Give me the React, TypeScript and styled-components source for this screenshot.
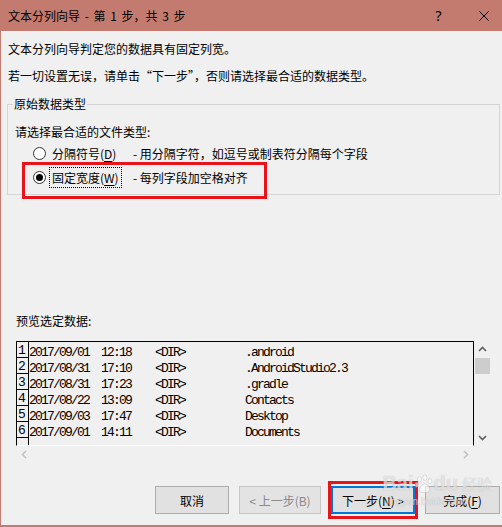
import styled, { createGlobalStyle } from 'styled-components'

const GlobalStyle = createGlobalStyle`
    html, body {
        margin: 0;
        padding: 0;
        background: #f0f0f0;
    }
    body {
        font-family: "Noto Sans CJK SC", "Noto Sans", sans-serif;
        font-size: 12px;
        color: #000;
    }
`

const rows = [
    { date: '2017/09/01', time: '12:18', name: '.android' },
    { date: '2017/08/31', time: '17:10', name: '.AndroidStudio2.3' },
    { date: '2017/08/31', time: '17:23', name: '.gradle' },
    { date: '2017/08/22', time: '13:09', name: 'Contacts' },
    { date: '2017/09/03', time: '17:47', name: 'Desktop' },
    { date: '2017/09/01', time: '14:11', name: 'Documents' },
]

const Chevron = ({ dir, color }: { dir: 'up' | 'down' | 'left' | 'right'; color: string }) => {
    const points = {
        up: '1,6 4.5,2.5 8,6',
        down: '1,3 4.5,6.5 8,3',
        left: '6,1 2.5,4.5 6,8',
        right: '3,1 6.5,4.5 3,8',
    }[dir]
    return (
        <svg width="9" height="9" viewBox="0 0 9 9">
            <polyline points={points} fill="none" stroke={color} strokeWidth="1.6" />
        </svg>
    )
}

const App = () => (
    <>
        <GlobalStyle />
        <Window>
            <TitleBar>
                <Title>文本分列向导 - 第 1 步，共 3 步</Title>
                <TitleControls>
                    <TitleButton>?</TitleButton>
                    <TitleButton>
                        <svg width="10" height="10" viewBox="0 0 10 10">
                            <path d="M0.5 0.5 L9.5 9.5 M9.5 0.5 L0.5 9.5" stroke="#000" strokeWidth="1" />
                        </svg>
                    </TitleButton>
                </TitleControls>
            </TitleBar>

            <Content>
                <Intro>文本分列向导判定您的数据具有固定列宽。</Intro>
                <Intro>若一切设置无误，请单击“下一步”，否则请选择最合适的数据类型。</Intro>

                <GroupBox>
                    <Legend>原始数据类型</Legend>
                    <Prompt>请选择最合适的文件类型:</Prompt>
                    <OptionRow>
                        <Radio />
                        <LabelCell>
                            <OptionLabel>
                                分隔符号(<Key>D</Key>)
                            </OptionLabel>
                        </LabelCell>
                        <OptionHint>- 用分隔字符，如逗号或制表符分隔每个字段</OptionHint>
                    </OptionRow>
                    <OptionRow>
                        <Radio $checked />
                        <LabelCell>
                            <OptionLabel $focused>
                                固定宽度(<Key>W</Key>)
                            </OptionLabel>
                        </LabelCell>
                        <OptionHint>- 每列字段加空格对齐</OptionHint>
                        <Highlight $left={9} $top={-3} $width={245} $height={37} />
                    </OptionRow>
                </GroupBox>

                <PreviewLabel>预览选定数据:</PreviewLabel>
                <Preview>
                    <DataFrame>
                        {rows.map((r, i) => (
                            <DataRow key={i}>
                                <RowNum>{i + 1}</RowNum>
                                <RowText>{`${r.date}  ${r.time}    <DIR>          ${r.name}`}</RowText>
                            </DataRow>
                        ))}
                        <DataRow>
                            <RowNum />
                        </DataRow>
                    </DataFrame>
                    <VScroll>
                        <ArrowBox>
                            <Chevron dir="up" color="#606060" />
                        </ArrowBox>
                        <Thumb />
                        <Spacer />
                        <ArrowBox>
                            <Chevron dir="down" color="#606060" />
                        </ArrowBox>
                    </VScroll>
                    <HScroll>
                        <ArrowBox>
                            <Chevron dir="left" color="#c2c2c2" />
                        </ArrowBox>
                        <ArrowBox>
                            <Chevron dir="right" color="#c2c2c2" />
                        </ArrowBox>
                    </HScroll>
                </Preview>

                <ButtonBar>
                    <DialogButton $width={74}>取消</DialogButton>
                    <DialogButton $width={82} $disabled disabled>
                        &lt; 上一步(B)
                    </DialogButton>
                    <DialogButton $width={84} $primary>
                        下一步(<Key>N</Key>) &gt;
                        <Highlight $left={-5} $top={-7} $width={90} $height={38} />
                    </DialogButton>
                    <DialogButton $width={75}>
                        完成(<Key>F</Key>)
                    </DialogButton>
                    <Watermark>
                        <WatermarkLogo>
                            Bai
                            <svg width="20" height="20" viewBox="0 0 22 22">
                                <g fill="rgba(255,255,255,0.6)" stroke="rgba(150,150,150,0.4)" strokeWidth="0.8">
                                    <ellipse cx="6" cy="6" rx="2.3" ry="3" />
                                    <ellipse cx="12" cy="4" rx="2.3" ry="3" />
                                    <ellipse cx="17.5" cy="8" rx="2.2" ry="2.8" />
                                    <ellipse cx="3" cy="12" rx="2" ry="2.6" />
                                    <path d="M6 19 C6 13 10 11 12 11 C15 11 18 14 17 19 C15 21 8 21 6 19 Z" />
                                </g>
                            </svg>
                            du
                            <WatermarkCjk>经验</WatermarkCjk>
                        </WatermarkLogo>
                        <WatermarkUrl>jingyan.baidu.com</WatermarkUrl>
                    </Watermark>
                </ButtonBar>
            </Content>
        </Window>
    </>
)

const Window = styled.div`
    width: 502px;
    height: 527px;
    box-sizing: border-box;
    border-left: 1px solid #c47b6f;
    border-bottom: 2px solid #c47b6f;
    background: #f0f0f0;
    overflow: hidden;
    display: flex;
    flex-direction: column;
`

const TitleBar = styled.div`
    height: 31px;
    flex-shrink: 0;
    display: flex;
    align-items: center;
    justify-content: space-between;
    padding-left: 7px;
    background: #c47b6f;
`

const Title = styled.span`
    font-size: 12px;
    line-height: 16px;
    word-spacing: 2px;
`

const TitleControls = styled.div`
    display: flex;
    margin-right: -4px;
`

const TitleButton = styled.span`
    width: 45px;
    height: 31px;
    display: flex;
    align-items: center;
    justify-content: center;
    font-family: "Noto Sans", sans-serif;
    font-size: 14px;
`

const Content = styled.div`
    display: flex;
    flex-direction: column;
    padding: 0 2px 0 7px;
`

const Intro = styled.div`
    margin-top: 9px;
    line-height: 18px;
`

const GroupBox = styled.fieldset`
    position: relative;
    margin: 10px 0 0 -1px;
    padding: 0 0 5px 5px;
    border: 1px solid #d5d5d5;
    min-width: 0;
`

const Legend = styled.legend`
    padding: 0 1px;
    line-height: 18px;
`

const Prompt = styled.div`
    margin-top: 10px;
    padding-left: 2px;
    line-height: 18px;
`

const OptionRow = styled.div`
    position: relative;
    display: flex;
    align-items: center;
    height: 24px;
    padding-left: 20px;
    &:first-of-type {
        margin-top: 1px;
    }
`

const Radio = styled.span<{ $checked?: boolean }>`
    width: 13px;
    height: 13px;
    box-sizing: border-box;
    border: 1px solid #333;
    border-radius: 50%;
    background: #fff;
    display: flex;
    align-items: center;
    justify-content: center;
    &::after {
        content: '';
        display: ${(p) => (p.$checked ? 'block' : 'none')};
        width: 7px;
        height: 7px;
        border-radius: 50%;
        background: #000;
    }
`

const LabelCell = styled.span`
    width: 84px;
    margin-left: 3px;
    display: flex;
`

const OptionLabel = styled.span<{ $focused?: boolean }>`
    height: 21px;
    box-sizing: border-box;
    display: inline-flex;
    align-items: center;
    padding: 0 2px;
    border: 1px dotted ${(p) => (p.$focused ? '#000' : 'transparent')};
`

const Key = styled.span`
    text-decoration: underline;
    text-underline-offset: 2px;
`

const OptionHint = styled.span`
    white-space: nowrap;
`

const Highlight = styled.span<{ $left: number; $top: number; $width: number; $height: number }>`
    position: absolute;
    left: ${(p) => p.$left}px;
    top: ${(p) => p.$top}px;
    width: ${(p) => p.$width}px;
    height: ${(p) => p.$height}px;
    box-sizing: border-box;
    border: 3px solid #e8141c;
    pointer-events: none;
`

const PreviewLabel = styled.div`
    margin-top: 117px;
    padding-left: 8px;
    line-height: 18px;
`

const Preview = styled.div`
    margin: 11px 0 0 8px;
    display: grid;
    grid-template-columns: 458px 17px;
    grid-template-rows: 105px 17px;
    width: 475px;
`

const DataFrame = styled.div`
    box-sizing: border-box;
    border: 1px solid #000;
    border-bottom-color: #fff;
    overflow: hidden;
`

const DataRow = styled.div`
    display: flex;
    height: 16px;
`

const RowNum = styled.span`
    width: 12px;
    height: 16px;
    flex-shrink: 0;
    box-sizing: border-box;
    border-right: 1px solid #000;
    border-bottom: 1px solid #000;
    padding: 0 0 0 1px;
    display: flex;
    align-items: flex-end;
    font-family: "Liberation Mono", monospace;
    font-size: 13px;
    line-height: 13px;
`

const RowText = styled.span`
    white-space: pre;
    font-family: "Liberation Mono", "Noto Sans CJK SC", monospace;
    font-size: 13px;
    letter-spacing: -1.8px;
    line-height: 16px;
    padding-top: 3px;
`

const VScroll = styled.div`
    display: flex;
    flex-direction: column;
    align-items: center;
`

const ArrowBox = styled.div`
    width: 17px;
    height: 17px;
    display: flex;
    align-items: center;
    justify-content: center;
`

const Thumb = styled.div`
    width: 15px;
    height: 16px;
    background: #cdcdcd;
`

const Spacer = styled.div`
    flex: 1;
`

const HScroll = styled.div`
    display: flex;
    justify-content: space-between;
`

const ButtonBar = styled.div`
    position: relative;
    display: flex;
    justify-content: flex-end;
    gap: 10px;
    margin: 23px 0 0 0;
`

const DialogButton = styled.button<{ $width: number; $primary?: boolean; $disabled?: boolean }>`
    position: relative;
    width: ${(p) => p.$width}px;
    height: 28px;
    padding: 0;
    box-sizing: border-box;
    font-family: "Noto Sans CJK SC", "Noto Sans", sans-serif;
    font-size: 12px;
    background: ${(p) => (p.$disabled ? '#e3e3e3' : '#e1e1e1')};
    color: ${(p) => (p.$disabled ? '#8a8a8a' : '#000')};
    border: ${(p) => (p.$primary ? '2px solid #0078d7' : p.$disabled ? '1px solid #c6c6c6' : '1px solid #adadad')};
`

const Watermark = styled.div`
    position: absolute;
    right: 8px;
    top: -14px;
    display: flex;
    flex-direction: column;
    align-items: flex-start;
    pointer-events: none;
    color: rgba(255, 255, 255, 0.6);
    text-shadow: 0 0 1px rgba(110, 110, 110, 0.45);
`

const WatermarkLogo = styled.div`
    display: flex;
    align-items: flex-end;
    font-family: "Liberation Sans", sans-serif;
    font-weight: bold;
    font-size: 20px;
    line-height: 22px;
`

const WatermarkCjk = styled.span`
    margin-left: 4px;
    font-family: "Noto Sans CJK SC", sans-serif;
    font-size: 15px;
    font-weight: normal;
    line-height: 20px;
`

const WatermarkUrl = styled.div`
    margin: 2px 0 0 4px;
    font-family: "Liberation Sans", sans-serif;
    font-size: 10px;
    line-height: 12px;
`

export default App
